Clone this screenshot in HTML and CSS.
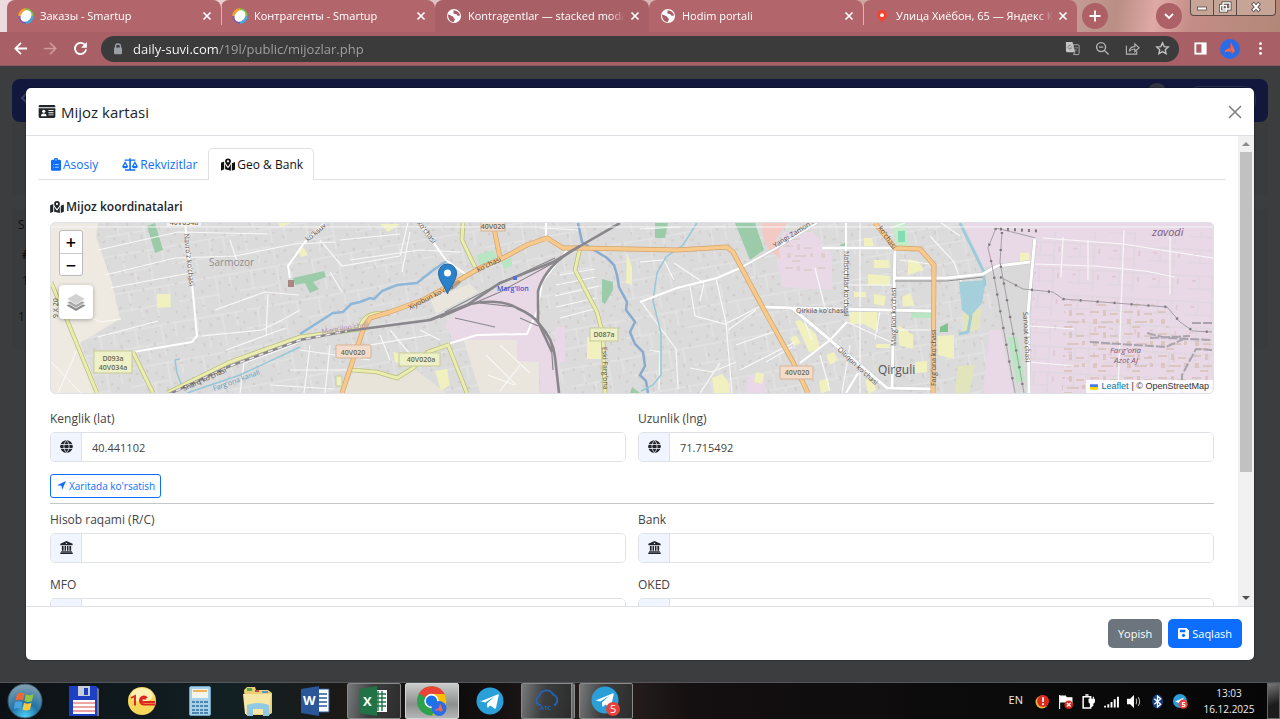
FILE: index.html
```html
<!DOCTYPE html>
<html lang="uz">
<head>
  <meta charset="UTF-8">
  <meta name="viewport" content="width=device-width, initial-scale=1.0">
  <title>Kontragentlar — stacked modal</title>
  <link rel="stylesheet" href="styles.css">
</head>
<body>

<!-- shared icons -->
<svg class="sprite" aria-hidden="true">
  <symbol id="i-close" viewBox="0 0 10 10"><path d="M1.5 1.5l7 7M8.5 1.5l-7 7" fill="none" stroke="currentColor" stroke-width="1.7"/></symbol>
  <symbol id="i-smartup" viewBox="0 0 16 16">
    <path d="M8 1.500A6.500 6.500 0 0 1 14.500 8" stroke="#7cc243" stroke-width="2.400" fill="none"/>
    <path d="M1.500 8A6.500 6.500 0 0 1 8 1.500" stroke="#f5a02c" stroke-width="2.600" fill="none"/>
    <path d="M14.500 8A6.500 6.500 0 0 1 8 14.500" stroke="#3fa9e0" stroke-width="2.600" fill="none"/>
    <path d="M8 14.500A6.500 6.500 0 0 1 1.500 8" stroke="#7a5bb5" stroke-width="2.400" fill="none"/>
    <ellipse cx="8" cy="8" rx="5" ry="6.200" fill="#fff" transform="rotate(40 8 8)"/>
  </symbol>
  <symbol id="i-world" viewBox="0 0 16 16">
    <circle cx="8" cy="8" r="7" fill="#fff"/>
    <path d="M2 6.500c2 .2 3 1.500 4.500 1.800 1.500.3.500 2 2 2.200.8.100.2 2-.8 3.500C4.500 14 2 11.500 2 6.500zM7 2.500c1.500 1.500-.5 2 1 3.200 1.200.8 2.500-.2 3 1.300.4 1.200 1.600.8 3 .5C13.500 4.500 11 2 7 2.500z" fill="#a95f66"/>
  </symbol>
  <symbol id="i-map" viewBox="0 0 16 14">
    <path d="M0 5l3.600-1.500V12.400L0 14zM4.700 6.500c.6 1.500 1.600 2.900 2.400 3.900.5.600 1.300.600 1.800 0 .8-1 1.800-2.400 2.400-3.900V14l-6.600-1.600zM12.400 5.500L16 4v8.600L12.400 14z" fill="currentColor"/>
    <path d="M8 0a3.400 3.400 0 0 0-3.400 3.400C4.600 5.200 7 8.200 8 9.300c1-1.100 3.400-4.100 3.400-5.900A3.400 3.400 0 0 0 8 0zm0 4.700a1.300 1.300 0 1 1 0-2.600 1.300 1.300 0 0 1 0 2.600z" fill="currentColor"/>
  </symbol>
  <symbol id="i-globe" viewBox="0 0 14 14">
    <circle cx="7" cy="7" r="6.800" fill="currentColor"/>
    <path d="M0 4.800h14M0 9.200h14M7 .5C3.300 4 3.300 10 7 13.500M7 .5c3.700 3.500 3.700 9.500 0 13" fill="none" stroke="#f1f5ff" stroke-width=".9"/>
  </symbol>
  <symbol id="i-bank" viewBox="0 0 14 14">
    <path d="M7 0l6.600 3v1.600H.4V3zM2 5.400h1.900v5H2zm2.900 0h1.600v5H4.900zm2.600 0h1.600v5H7.500zm2.600 0H12v5h-1.900zM1.200 11h11.600v1H1.200zM.3 12.300h13.400V14H.3z" fill="currentColor"/>
    <circle cx="7" cy="2.600" r=".7" fill="#f1f5ff"/>
  </symbol>
  <symbol id="i-telegram" viewBox="0 0 28 28">
    <circle cx="14" cy="14" r="13.500" fill="#2a9fd8"/>
    <path d="M5 14.200L21.500 7.400c.8-.3 1.400.2 1.200 1.200L20 20.800c-.2.900-.8 1.100-1.500.7l-4.200-3.100-2 2c-.5.500-1 .3-1-.4l-.3-3.600 7-6.300-8.800 5.500-3.900-1.200c-.9-.3-.9-.9-.3-1.200z" fill="#fff"/>
  </symbol>
</svg>

<!-- browser tabs -->
<header class="tabstrip">
  <div class="tab">
    <svg class="favicon"><use href="#i-smartup"/></svg>
    <span class="tab-title">Заказы - Smartup</span>
    <button class="tab-close" aria-label="Close"><svg><use href="#i-close"/></svg></button>
  </div>
  <div class="tab tab-line">
    <svg class="favicon"><use href="#i-smartup"/></svg>
    <span class="tab-title">Контрагенты - Smartup</span>
    <button class="tab-close" aria-label="Close"><svg><use href="#i-close"/></svg></button>
  </div>
  <div class="tab tab-active">
    <svg class="favicon"><use href="#i-world"/></svg>
    <span class="tab-title">Kontragentlar — stacked modal</span>
    <button class="tab-close" aria-label="Close"><svg><use href="#i-close"/></svg></button>
  </div>
  <div class="tab">
    <svg class="favicon"><use href="#i-world"/></svg>
    <span class="tab-title">Hodim portali</span>
    <button class="tab-close" aria-label="Close"><svg><use href="#i-close"/></svg></button>
  </div>
  <div class="tab tab-line">
    <svg class="favicon" viewBox="0 0 16 16"><path d="M8 2a5 5 0 0 0-5 5.200c0 3 3.500 3.600 4.200 6.800h1.600C9.500 10.800 13 10.200 13 7.200A5 5 0 0 0 8 2z" fill="#f8402f"/><circle cx="8" cy="7.200" r="1.900" fill="#fff"/></svg>
    <span class="tab-title">Улица Хиёбон, 65 — Яндекс Карты</span>
    <button class="tab-close" aria-label="Close"><svg><use href="#i-close"/></svg></button>
  </div>
  <button class="round-button" aria-label="New tab"><svg viewBox="0 0 12 12"><path d="M6 .5v11M.5 6h11" stroke="#fff" stroke-width="1.800"/></svg></button>
  <button class="round-button tab-search" aria-label="Search tabs"><svg viewBox="0 0 12 12"><path d="M2 4l4 4 4-4" fill="none" stroke="#fff" stroke-width="1.800"/></svg></button>
  <div class="window-buttons">
    <button aria-label="Minimize"><svg viewBox="0 0 16 14"><rect x="3.500" y="7" width="9" height="3" fill="#fff" stroke="#5a4a48" stroke-width=".8"/></svg></button>
    <button aria-label="Restore"><svg viewBox="0 0 16 14"><g fill="none" stroke="#4f4341" stroke-width="3"><path d="M6 3h7v6h-7zM3.500 5.500h6v5.500h-6z"/></g><g fill="none" stroke="#fff" stroke-width="1.400"><path d="M6 3h7v6h-7zM3.500 5.500h6v5.500h-6z"/></g></svg></button>
    <button class="window-close" aria-label="Close window"><svg viewBox="0 0 16 14"><path d="M4.500 3l7 8M11.500 3l-7 8" stroke="#4f4341" stroke-width="3.600"/><path d="M5 3.500l6 7M11 3.500l-6 7" stroke="#fff" stroke-width="2"/></svg></button>
  </div>
</header>

<!-- address bar -->
<nav class="toolbar">
  <button class="tool" aria-label="Back"><svg viewBox="0 0 16 16"><path d="M8.500 2L2.500 8l6 6M3 8h12" fill="none" stroke="#fff" stroke-width="1.900"/></svg></button>
  <button class="tool" aria-label="Forward"><svg viewBox="0 0 16 16"><path d="M7.500 2l6 6-6 6M13 8H1" fill="none" stroke="#d09a9d" stroke-width="1.700"/></svg></button>
  <button class="tool" aria-label="Reload"><svg viewBox="0 0 16 16"><path d="M13 4.500A6 6 0 1 0 14 9" fill="none" stroke="#fff" stroke-width="2"/><path d="M14.800 1v6.200H8.600z" fill="#fff"/></svg></button>
  <div class="omnibox">
    <svg class="lock" viewBox="0 0 10 12"><path d="M2.500 5V3.500a2.500 2.500 0 0 1 5 0V5" fill="none" stroke="#9aa0a6" stroke-width="1.300"/><rect x="1" y="4.600" width="8" height="6.600" rx="1" fill="#9aa0a6"/></svg>
    <input class="url" type="text" aria-label="Address" value="daily-suvi.com/19l/public/mijozlar.php">
    <button class="tool" aria-label="Translate"><svg viewBox="0 0 16 16"><path d="M1 1h7l2.500 11H2.500A1.500 1.500 0 0 1 1 10.500z" fill="#c4c4c4"/><path d="M8.500 4H14a1 1 0 0 1 1 1v8.500a1 1 0 0 1-1 1H9l1.500-2.500z" fill="none" stroke="#b0b0b0"/><path d="M7 5.500A2 2 0 1 0 7 7.500H5.200M10 7h4M12 6v1m1.300 0c-.5 2-1.500 3-2.800 4m0-3c.5 1.200 1.500 2 2.500 2.700" fill="none" stroke="#777" stroke-width=".9"/></svg></button>
    <button class="tool" aria-label="Zoom"><svg viewBox="0 0 16 16"><circle cx="6.500" cy="6.500" r="4.800" fill="none" stroke="#b4b4b4" stroke-width="1.500"/><path d="M10 10l4.500 4.500M4.200 6.500h4.600" stroke="#b4b4b4" stroke-width="1.500"/></svg></button>
    <button class="tool" aria-label="Share"><svg viewBox="0 0 16 16"><path d="M1.500 5v9h11v-3M4.500 11c.5-3.500 2.500-5 6-5V3l4.500 4.200-4.500 4.200V8.500c-2.500 0-4.500.5-6 2.500z" fill="none" stroke="#b4b4b4" stroke-width="1.200"/></svg></button>
    <button class="tool" aria-label="Bookmark"><svg viewBox="0 0 16 16"><path d="M8 2l1.800 4 4.400.4-3.300 2.900 1 4.300L8 11.300l-3.900 2.300 1-4.300-3.300-2.900 4.400-.4z" fill="none" stroke="#c4c4c4" stroke-width="1.400"/></svg></button>
  </div>
  <button class="tool" aria-label="Side panel"><svg viewBox="0 0 16 16"><path d="M1.500 1.500h13v13h-13z" fill="#fff"/><path d="M3.500 3.500H9v9H3.500z" fill="#a95f66"/></svg></button>
  <button class="tool tool-avatar" aria-label="Profile"><svg viewBox="0 0 20 20"><circle cx="10" cy="10" r="10" fill="#2a6be8"/><path d="M11 3.500c1 2 2 4.500 4 8.500l-2.500 2.500-3-2.200-5 .7c.5-2 3-3.200 5.200-3.800z" fill="#f0694f"/><path d="M11 3.500l-.7 6.500 2.200 4.500" fill="none" stroke="#c44a52" stroke-width=".8"/></svg></button>
  <button class="tool" aria-label="Menu"><svg viewBox="0 0 16 16"><circle cx="8" cy="2.800" r="1.500" fill="#fff"/><circle cx="8" cy="8" r="1.500" fill="#fff"/><circle cx="8" cy="13.200" r="1.500" fill="#fff"/></svg></button>
</nav>

<main class="page">
  <!-- dimmed page under the modal -->
  <div class="page-nav">
    <svg class="page-back" viewBox="0 0 8 12"><path d="M7 1L2 6l5 5" fill="none" stroke="#3b4160" stroke-width="2"/></svg>
    <span class="page-avatar"></span>
    <span class="page-pill"></span>
  </div>
  <div class="page-card"></div>
  <div class="page-card page-table">
    <p>S</p>
    <p class="cell"><b>#</b></p>
    <p class="cell">1</p>
    <p class="pager">1</p>
  </div>

  <section class="modal" role="dialog" aria-labelledby="modalTitle">
    <div class="modal-header">
      <svg class="title-icon" viewBox="0 0 18 14"><path d="M1.500 0h15A1.500 1.500 0 0 1 18 1.500V2.500H0v-1A1.500 1.500 0 0 1 1.500 0zM0 3.500h18v9a1.500 1.500 0 0 1-1.500 1.500h-15A1.500 1.500 0 0 1 0 12.500z" fill="currentColor"/><circle cx="5.500" cy="6.800" r="1.700" fill="#fff"/><path d="M2.500 12c0-2 1.200-2.800 3-2.800s3 .8 3 2.800zM10.500 5.500H16v1h-5.500zm0 2.300H16v1h-5.500zm0 2.300H16v1h-5.500z" fill="#fff"/></svg>
      <h1 id="modalTitle">Mijoz kartasi</h1>
      <button class="modal-close" aria-label="Yopish"><svg viewBox="0 0 14 14"><path d="M1 1l12 12M13 1L1 13" stroke="#7d7d7d" stroke-width="1.500"/></svg></button>
    </div>

    <div class="modal-middle">
      <div class="modal-body">
        <div class="nav-tabs">
          <a href="#asosiy"><svg class="i-clip" viewBox="0 0 11 14"><path d="M1.500 1.800h1.800a2.200 2.200 0 0 1 4.400 0h1.800A1.500 1.500 0 0 1 11 3.300v9.200A1.500 1.500 0 0 1 9.500 14h-8A1.500 1.500 0 0 1 0 12.500V3.300a1.500 1.500 0 0 1 1.500-1.500z" fill="currentColor"/><path d="M2.500 7h1m1 0h4m-6 3h1m1 0h4" stroke="#fff" stroke-width=".7"/><circle cx="5.500" cy="2" r=".7" fill="#fff"/></svg>Asosiy</a>
          <a href="#rekvizitlar"><svg class="i-scale" viewBox="0 0 18 14"><path d="M8.200 0h1.600v1.400H15v1.500h-5v9.500h5V14H3.500v-1.600h4.700V2.900H3V1.400h5.200z" fill="currentColor"/><path d="M.2 9.300L3.500 3.200l3.300 6.100c0 1.200-1.400 2-3.300 2s-3.300-.8-3.300-2zm2-.6h2.600L3.500 6.200zM11.200 9.300l3.300-6.100 3.300 6.100c0 1.200-1.400 2-3.300 2s-3.300-.8-3.300-2zm2-.6h2.600l-1.300-2.500z" fill="currentColor" fill-rule="evenodd"/></svg>Rekvizitlar</a>
          <a href="#geo" class="active"><svg class="i-map"><use href="#i-map"/></svg>Geo &amp; Bank</a>
        </div>

        <div class="tab-pane">
          <h2><svg class="i-map"><use href="#i-map"/></svg>Mijoz koordinatalari</h2>

          <div class="map">
            <svg class="map-tiles" viewBox="51 222 1162 172" preserveAspectRatio="xMidYMid slice" aria-label="Marg'ilon">
              <defs>
                <pattern id="houses" width="46" height="34" patternUnits="userSpaceOnUse" patternTransform="rotate(-14)">
                  <path d="M3 4h2v3H3zM9 11h3v2H9zM15 3h2v2h-2zM22 8h2v4h-2zM30 5h3v2h-3zM38 12h2v3h-2zM6 20h2v3H6zM14 25h3v2h-3zM24 19h2v2h-2zM33 24h2v4h-2zM41 21h3v2h-3zM20 30h2v3h-2z" fill="#cbc1bb" opacity=".5"/>
                </pattern>
                <pattern id="lanes" width="62" height="38" patternUnits="userSpaceOnUse" patternTransform="rotate(-10)">
                  <path d="M0 6h62M0 24h40M14 6v18M40 6v32M54 6v14M24 24v14" fill="none" stroke="#f2f2f2" stroke-width="1"/>
                </pattern>
                <pattern id="grid" width="40" height="26" patternUnits="userSpaceOnUse" patternTransform="rotate(3)">
                  <path d="M0 5h40M0 18h26M12 5v13M26 5v21" fill="none" stroke="#dcd5dc" stroke-width="1.200"/>
                  <path d="M5 9h4v2H5zM30 9h2v5h-2z" fill="#d6b9bd" opacity=".5"/>
                </pattern>
                <pattern id="works" width="34" height="22" patternUnits="userSpaceOnUse">
                  <path d="M2 3h9v2H2zM15 2h3v6h-3zM22 5h8v2h-8zM5 11h4v5H5zM13 13h12v2H13zM28 11h3v4h-3zM10 18h8v2h-8z" fill="#d6c0b6"/>
                </pattern>
              </defs>

              <rect x="51" y="222" width="1162" height="172" fill="#dbdbdb"/>
              <rect x="51" y="222" width="1162" height="172" fill="url(#lanes)" opacity=".5"/>
              <rect x="51" y="222" width="1162" height="172" fill="url(#houses)"/>

              <!-- fields -->
              <path d="M51 222h47l-2 14 16 47 8 36-30 18-10 6 20 51H51z" fill="#eeeae2"/>
              <path d="M463 338h76v55h-59zM430 298l40-14 8 8-42 22z" fill="#eae6de"/>
              <path d="M342 393l14-26 40 11 20-8 30 23z" fill="#e8e4da"/>
              <path d="M51 362l30 31M51 300l50 22 20-3M80 343l-22 50" stroke="#fafafa" fill="none"/>

              <!-- industrial areas -->
              <g fill="#e9d9e7">
                <path d="M445 325l15-17 93-46-10 13-6 37 3 16 20 20v45h-20v-31l-23-1v-21h-64z"/>
                <path d="M555 327h10v35h-8z"/>
                <path d="M783 232h30l19 23v35l-49-3-6-25z"/>
                <path d="M962 222h251v172h-186l6-132-48 6z"/>
                <path d="M990 330h18l9 63h-34z"/>
                <path d="M748 375h16l2 18h-20z"/>
              </g>
              <path d="M1036 232h177v162h-184z" fill="url(#grid)"/>
              <path d="M1064 304h100l6 30 42 10v50h-150z" fill="url(#works)" opacity=".75"/>
              <path d="M785 240l24-4 18 20-2 16-40-2z" fill="url(#works)" opacity=".5"/>
              <path d="M1034 264l-6 128-14 2-15-72-14-40-2-15z" fill="#d9d9d9"/>
              <path d="M762 223h25l-11 16 5 20-12-9-6-14z" fill="#f4c9c4"/>

              <!-- parks -->
              <g fill="#9ccbaa">
                <path d="M147 226l8-3 8 27-8 3zM293 278l31-7 2 6-13 5 6 7-9 4-5-10-10 2z"/>
                <path d="M602 279l11 3v8l-8 14-3-2zM655 223h13l-3 15h-10zM735 223h20l9 27-14 10zM632 387l8 6h-10z"/>
                <path d="M836 248l11-7v7z"/>
              </g>
              <path d="M477 255l16-5 5 10-18 7zM501 262l11-5v9l-8 3zM911 312h20v6h-20zM1008 337h9l8 43-8 3z" fill="#b9e6c2"/>
              <path d="M893 223h12l4 22-8 6-6-10z" fill="#c5ebc9"/>
              <path d="M898 231h7v11h-7zM876 296h7v7h-7zM800 327h4l4 10-4 1z" fill="#84dcb2"/>
              <path d="M940 327l8-4v9h-8zM937 336h9v6h-9z" fill="#7cc48c"/>
              <rect x="288" y="280" width="6" height="7" fill="#a98780"/>

              <!-- schools and yards -->
              <g fill="#f1f0bf">
                <path d="M157 294h13l1 13-14 1zM299 252l4-5 5 8-7 2zM380 224h20l-12 8zM278 223h14l-12 4zM587 337h16v22h-16zM627 252l5 15v18l-6-2zM393 352l10 2 2 12-10-4zM435 371l12-2 3 16-9 6z"/>
                <path d="M864 238h8l2 8-10 2zM874 260h15v8h-15zM868 274l22 2v10l-22-1zM908 259l10 2 6 9-16 5zM854 292h12v5h-12zM849 312h28l1 20-14-8h-14zM874 294l12 2-2 10-10-2zM902 297l8-4 5 13h-12zM795 321l5-1 16 14 4 15-11 3zM790 338l6-3 5 8-7 3zM826 355l8-3 4 8-8 5zM898 325l15 10v14l-14-4zM876 344h14v4h-14zM915 362l12-1v11l-12 1zM937 336l17-1v24l-16-4zM819 381l9-3 2 12-9 4zM865 380l8-2 3 12-8 4zM712 378l10-4 8 10v9h-16zM756 372l8 2-2 10-8-2zM1020 253h9v8h-9z"/>
              </g>
              <path d="M962 314l20-6-4 22-14 2zM958 366l17-1-6 28h-14z" fill="#e2e5bb"/>

              <!-- minor streets -->
              <g fill="none" stroke="#f8f8f8" stroke-width="1.200">
                <path d="M98 250l80-18 90 2M105 275l70-17 60-2 60-12 40-2M110 288l80-15M98 337l60-16M202 336l60-6 24-12 14-8M215 310l50-18 34 3M230 240l8 24M320 240l22 26 58-10 8-34M268 294l-2 42M330 272l12 20M226 350l60-22M240 393l4-30 54-20"/>
                <path d="M300 350l70 10M290 370h60M270 385l64 4M310 345l-6 48M330 345l-5 48M420 330l20 10M380 335l10 25M370 345l60-10M390 330l20 24"/>
                <path d="M340 240l60-6M350 260l70-10 40 2M410 232l-8 40M540 228l40 2M500 292l30-16M486 355l30 30M500 345l30 28M488 375l26 10M520 365l-20 26"/>
                <path d="M560 275l35-6M556 285l40-8M555 296l44-10M556 307l40-9M560 318l38-10M640 229l40-2M640 262l24-2 10 20M674 263l30 20-4 18M642 303l34 46M676 349l2 40M716 278l10 45 6 70M690 286l5 30 30 8 36-18M728 330l28-20M736 345l40-14M690 368l22 4 24-10M740 370l55-28M766 362l26-15M700 393l20-30M650 350l10 2-1 38"/>
                <path d="M815 268l10 40M800 310l12 30M847 322l48 22M860 223v170M847 285h48M900 260l30 4M895 330h38M905 223l-15 5M940 222l20 14M930 236l24 26 8 22M820 355l10 36M850 345l-8 48M880 311l-5 28"/>
                <path d="M1035 264l60 2 50 5 30 6M1030 326l44 3M1030 362l44 4M1063 237l-2 40M1043 238l80 6 90 14M1088 240v40M1124 230l-6 160M1170 234v60"/>
              </g>

              <!-- water -->
              <g fill="none" stroke="#8fb8d8" stroke-width="2.500">
                <path d="M300 334l33-21 10-1 8-8 9-2 10-4 4 1 8-8 15-6 20-2 15-12 16-11"/>
                <path d="M578 223l4 19 12 8 13 8 7 7 3 10 2 12 8 15-1 8 9 12-5 10 5 12 8 8 2 14-5 9 6 6 2 12" stroke="#8aabce"/>
              </g>
              <path d="M187 393l53-18 60-28M180 359l-5 1 2 13 6 16M697 223l-14 22-17 12-9 16-4 28 8 32v42l-8 10-12 6" fill="none" stroke="#95c8d8" stroke-width="1.500"/>
              <path d="M959 282l27-2-4 23-12 14-8-7z" fill="#a4cfdb"/>
              <path d="M960 223l23 47 2 16M971 315l-3 17-9 2" fill="none" stroke="#9dcbd9" stroke-width="3"/>

              <!-- white roads -->
              <g fill="none" stroke="#c6c6c6" stroke-width="4">
                <path d="M817 223l-44 27-33 18" stroke-width="3"/>
                <path d="M765 307l27 1 141 3M792 308l38 32 57 48 46 1M895 249l-3 139M822 248h73M895 278h52l36-4 14-8 33-4M1035 237l-7 76 1 80"/>
              </g>
              <g fill="none" stroke="#fff" stroke-width="3">
                <path d="M765 307l27 1 141 3M792 308l38 32 57 48 46 1M895 249l-3 139M822 248h73M895 278h52l36-4 14-8 33-4M1035 237l-7 76 1 80"/>
                <path d="M817 223l-44 27-33 18-23 10-40 10-37 14M185 223l7 60 5 53-5 6-59 10M290 278l-2-12 17-24 20-20M420 224l26 36 22 16M448 344l29-9 50-1 10-22 5-30 25-32M546 238v-16M800 363l30-23 17-18M846 223v85M846 393l12-20" stroke-width="2"/>
              </g>
              <path d="M895 281h52l36-4" stroke="#8e8e8e" fill="none"/>

              <!-- yellow roads -->
              <path d="M51 282l16 38 30 73M133 352l20 41M167 393l63-31 70-25 60-8M463 223l-1 17 13 27M352 370l25 2 20 6 16-10 15-16 20-7 19 48M580 248l-5 22 22 42 6 23 2 58M360 328q4-18 30-14" fill="none" stroke="#b9bd77" stroke-width="4.500"/>
              <path d="M51 282l16 38 30 73M133 352l20 41M167 393l63-31 70-25 60-8M463 223l-1 17 13 27M352 370l25 2 20 6 16-10 15-16 20-7 19 48M580 248l-5 22 22 42 6 23 2 58M360 328q4-18 30-14" fill="none" stroke="#e9edb0" stroke-width="3"/>

              <!-- orange roads -->
              <path d="M342 393l21-63 7-12 20-6 33-12 24-13 33-19 23-10 24-13 20-7 16 10h17l97 2 50-3 6 5 30 56 30 54 15 31M493 223l7 35M875 223l20 25 25 1 14 16-1 128" fill="none" stroke="#d3a46b" stroke-width="5"/>
              <path d="M342 393l21-63 7-12 20-6 33-12 24-13 33-19 23-10 24-13 20-7 16 10h17l97 2 50-3 6 5 30 56 30 54 15 31M493 223l7 35M875 223l20 25 25 1 14 16-1 128" fill="none" stroke="#f7c98c" stroke-width="3.600"/>

              <!-- railways -->
              <g fill="none" stroke="#8a878c" stroke-width="2.600">
                <path d="M167 395l63-29 70-26 47-9 83-11 37-15 33-22 53-21 29-17 38-22"/>
                <path d="M430 320l40-16q30-6 47 4 18 8 23 17 13 14 15 32l4 36M580 246q-34 18-42 45v31l14 30"/>
                <path d="M440 318l60-26 55-30M445 312l50-26 60-28M455 318l40 9M480 303l36 4M520 318l18 8M551 340l2 30" stroke-width="1.200"/>
              </g>
              <path d="M167 395l63-29 70-26 47-9" fill="none" stroke="#f1f1f1" stroke-width="1.400" stroke-dasharray="5 5"/>
              <path d="M1147 333l20 5 45 2M1090 342l76 5 20-9M1192 323h20M1182 393v-18l14-26 16 1M1150 338l40-2" fill="none" stroke="#a9a3ac" stroke-width="2" stroke-dasharray="9 2"/>

              <!-- power lines -->
              <path d="M996 228l-8 20 4 17 23 128M1002 232l-2 30 24 131M996 228l40 10M1000 277l23 12 30 3 10 7 104 8 13 15 13 9 19 1" fill="none" stroke="#a59fa5"/>
              <path d="M996 228l-8 20 4 17 23 128M1002 232l-2 30 24 131M1000 277l23 12 30 3 10 7 104 8 13 15 13 9 19 1" fill="none" stroke="#7d787e" stroke-width="2.400" stroke-dasharray="2 15"/>
              <path d="M1000 229l38 2" stroke="#7d787e" stroke-width="3" stroke-dasharray="2 5"/>
              <path d="M51 227h1162" stroke="#f6f6f6"/>

              <!-- road number plates -->
              <g fill="#eef0c8" stroke="#c7cb94">
                <rect x="94" y="351" width="38" height="22"/><rect x="399" y="353" width="41" height="13"/><rect x="590" y="328" width="28" height="13"/><rect x="336" y="376" width="6" height="10"/>
              </g>
              <g fill="#f3dccb" stroke="#d9b294">
                <rect x="336" y="345" width="35" height="13" rx="1"/><rect x="780" y="366" width="33" height="13" rx="1"/><rect x="481" y="221" width="24" height="10"/>
              </g>
              <rect x="167" y="221" width="34" height="5" fill="#f4f4f4"/>
              <g class="map-ref" text-anchor="middle">
                <text x="113" y="361">D093a</text><text x="113" y="370">40V034a</text><text x="421" y="362">40V020a</text><text x="604" y="337">D087a</text>
                <text x="353" y="355">40V020</text><text x="797" y="375">40V020</text><text x="184" y="225">40V034a</text><text x="493" y="229">40V020</text>
              </g>

              <!-- street names -->
              <g class="map-street">
                <text transform="translate(184 234) rotate(84)">Navro'z ko'chasi</text>
                <text transform="translate(308 242) rotate(-41)">ko'ksuv</text>
                <text transform="translate(417 223) rotate(53)">ko'chasi</text>
                <text transform="translate(184 391) rotate(-24)">Sharq ko'chasi</text>
                <text transform="translate(410 310) rotate(-27)">Xiyobon ko'cha</text>
                <text transform="translate(478 272) rotate(-25)">ko'chasi</text>
                <text transform="translate(775 248) rotate(-32)">Yangi Zamon ko'</text>
                <text x="796" y="313">Qirkila ko'chasi</text>
                <text transform="translate(844 251) rotate(90)">Nafistchilar ko'chasi</text>
                <text transform="translate(896 346) rotate(-90)">Marg'ilon ko'chasi</text>
                <text transform="translate(837 350) rotate(43)">Oltiqon ko'chasi</text>
                <text transform="translate(936 386) rotate(-90)">Farg'ona ko'chasi</text>
                <text transform="translate(878 228) rotate(56)">ko'chasi</text>
                <text transform="translate(1023 312) rotate(87)">Sanoat ko'chasi</text>
                <text transform="translate(602 347) rotate(88)">Eski Farg'ona</text>
                <text transform="translate(58 318) rotate(-90)">9 X 20</text>
              </g>
              <text class="map-water" transform="translate(214 391) rotate(-20)">Farg'ona kanali</text>
              <text class="map-rail" transform="translate(322 334) rotate(-9)">Marg'ilon choli</text>
              <text class="map-suburb" x="209" y="266">Sarmozor</text>
              <text class="map-town" x="878" y="374">Qirguli</text>
              <rect x="513" y="276" width="4" height="4" fill="#5b6fd6"/>
              <text class="map-station" x="497" y="291">Marg'ilon</text>
              <g class="map-plant">
                <text x="1152" y="236" class="big">zavodi</text>
                <text x="1110" y="353">Farg'ona</text>
                <text x="1114" y="363">Azot AJ</text>
              </g>

              <!-- marker -->
              <ellipse cx="453" cy="286" rx="9" ry="3" fill="#555" opacity=".35" transform="rotate(-35 453 286)"/>
              <path d="M447.500 294c-2-7-9-13-9-21a9 9 0 0 1 18 0c0 8-7 14-9 21z" fill="#2a81cb" stroke="#2467a3"/>
              <circle cx="447.500" cy="273" r="3.500" fill="#fff"/>
            </svg>

            <div class="map-controls">
              <div class="zoom">
                <button aria-label="Zoom in">+</button>
                <button aria-label="Zoom out">−</button>
              </div>
              <button class="layers" aria-label="Layers"><svg viewBox="0 0 20 20"><path d="M10 9l9.500 4.500L10 19 .5 13.500z" fill="#8c8c8c"/><path d="M10 6l9.500 4.500L10 16 .5 10.500z" fill="#a8a8a8" stroke="#fff" stroke-width=".7"/><path d="M10 1.500L19.500 7 10 12.500.5 7z" fill="#d2d2d2" stroke="#fff" stroke-width=".7"/></svg></button>
            </div>
            <div class="attribution">
              <svg viewBox="0 0 12 8"><path d="M0 0h12v4H0z" fill="#4c7be1"/><path d="M0 4h12v4H0z" fill="#ffd500"/></svg>
              <a href="#leaflet">Leaflet</a> | © OpenStreetMap
            </div>
          </div>

          <div class="row">
            <div class="field">
              <label for="lat">Kenglik (lat)</label>
              <div class="input-group"><span class="addon"><svg><use href="#i-globe"/></svg></span><input id="lat" type="text" value="40.441102"></div>
            </div>
            <div class="field">
              <label for="lng">Uzunlik (lng)</label>
              <div class="input-group"><span class="addon"><svg><use href="#i-globe"/></svg></span><input id="lng" type="text" value="71.715492"></div>
            </div>
          </div>

          <button class="show-on-map"><svg viewBox="0 0 10 10"><path d="M0 4.600L10 0 5.600 10 5 5.200z" fill="currentColor"/></svg>Xaritada ko'rsatish</button>

          <hr>

          <div class="row">
            <div class="field">
              <label for="account">Hisob raqami (R/C)</label>
              <div class="input-group"><span class="addon"><svg><use href="#i-bank"/></svg></span><input id="account" type="text"></div>
            </div>
            <div class="field">
              <label for="bank">Bank</label>
              <div class="input-group"><span class="addon"><svg><use href="#i-bank"/></svg></span><input id="bank" type="text"></div>
            </div>
            <div class="field">
              <label for="mfo">MFO</label>
              <div class="input-group"><span class="addon"></span><input id="mfo" type="text"></div>
            </div>
            <div class="field">
              <label for="oked">OKED</label>
              <div class="input-group"><span class="addon"></span><input id="oked" type="text"></div>
            </div>
          </div>
        </div>
      </div>

      <div class="scrollbar">
        <span class="arrow arrow-up"></span>
        <div class="track"><div class="thumb"></div></div>
        <span class="arrow arrow-down"></span>
      </div>
    </div>

    <div class="modal-footer">
      <button class="btn btn-secondary">Yopish</button>
      <button class="btn btn-primary"><svg viewBox="0 0 12 12"><path d="M1.500 0h7.800L12 2.700v7.800a1.500 1.500 0 0 1-1.500 1.500h-9A1.500 1.500 0 0 1 0 10.500v-9A1.500 1.500 0 0 1 1.500 0z" fill="#fff"/><path d="M2 2h6v2.500H2z" fill="#0d6efd"/><circle cx="6" cy="8" r="1.700" fill="#0d6efd"/></svg>Saqlash</button>
    </div>
  </section>
</main>

<!-- windows taskbar -->
<footer class="taskbar">
  <button class="start" aria-label="Start">
    <svg viewBox="0 0 36 36">
      <defs><radialGradient id="orb" cx=".5" cy=".95" r=".9"><stop offset="0" stop-color="#4fd0f5"/><stop offset=".45" stop-color="#2173a8"/><stop offset="1" stop-color="#7f9db0"/></radialGradient></defs>
      <circle cx="18" cy="18" r="17" fill="url(#orb)" stroke="#38566b"/>
      <path d="M10 11c3-1.800 5-1.600 7.500-.3l-1.500 6.800c-2.500-1.200-4.500-1.300-7.500.2z" fill="#ee6a35"/>
      <path d="M19 11.300c2.500 1.200 4.500 1.200 7.500-.3L25 18c-3 1.500-5 1.300-7.500 0z" fill="#8ec63f"/>
      <path d="M8 19.300c3-1.500 5-1.300 7.500 0L14 26c-2.500-1.300-4.500-1.400-7.300 0z" fill="#4ba3e3"/>
      <path d="M17 19.800c2.500 1.300 4.500 1.300 7.500 0L23 26.500c-3 1.500-5 1.300-7.500 0z" fill="#fccb3d"/>
    </svg>
  </button>
  <button class="task" aria-label="Total Commander">
    <svg viewBox="0 0 30 30"><path d="M0 0h27l3 3v27H0z" fill="#1c3fc4"/><path d="M30 3v27h-2V2z" fill="#777"/><rect x="9" y="0" width="12" height="10" fill="#c9cdd8"/><rect x="15" y="2" width="4" height="7" fill="#1c3fc4"/><rect x="4" y="14" width="22" height="14" fill="#fff"/><path d="M4 17h22M4 21h22M4 25h22" stroke="#e04848" stroke-width="1.200"/></svg>
  </button>
  <button class="task" aria-label="1C">
    <svg viewBox="0 0 30 30"><circle cx="15" cy="15" r="14" fill="#f7d65c"/><ellipse cx="15" cy="9" rx="11" ry="7" fill="#fdf0b4"/><path d="M4 12l4-2v9.500M20 12a4 4 0 1 0-3 6.500H28M18.500 13.500a2 2 0 1 0-1 2.500H28" fill="none" stroke="#de2420" stroke-width="1.900"/></svg>
  </button>
  <button class="task" aria-label="Calculator">
    <svg viewBox="0 0 30 30"><rect x="4.500" y=".5" width="21" height="29" rx="1.500" fill="#a9d2ea" stroke="#6fa3c2"/><rect x="7" y="3" width="16" height="9" fill="#f4f4ea"/><path d="M8 4h14v2H8z" fill="#f0b357"/><path d="M7 16h3m1 0h3m1 0h3m1 0h4M7 20h3m1 0h3m1 0h3m1 0h4M7 24h3m1 0h3m1 0h3m1 0h4M7 27h7m1 0h3m1 0h4" stroke="#4d86ad" stroke-width="2"/></svg>
  </button>
  <button class="task" aria-label="Explorer">
    <svg viewBox="0 0 30 30"><path d="M1 4l3-3h8l1 3h12l4 3v20l-3 2H3z" fill="#eccf72"/><path d="M4 2h5v3H4z" fill="#4fae4b"/><path d="M12 4h4v2h-4z" fill="#c94a3b"/><path d="M19 5h6v2h-6z" fill="#4c9bd6"/><path d="M0 8h28l-2 20H2z" fill="#f7e7a5"/><path d="M4 19q11-4 22 0v11h-6v-7H10v7H4z" fill="#8fc9e4"/></svg>
  </button>
  <button class="task" aria-label="Word">
    <svg viewBox="0 0 30 30"><path d="M14 3h14v23H14z" fill="#fff" stroke="#2b579a"/><path d="M17 8h9m-9 4h9m-9 4h9m-9 4h9" stroke="#2b579a" stroke-width="1.600"/><path d="M0 3l18-3v30L0 27z" fill="#2b579a"/><text x="2" y="19" class="office">W</text></svg>
  </button>
  <button class="task task-open" aria-label="Excel">
    <svg viewBox="0 0 30 30"><path d="M14 4h14v22H14z" fill="#fff"/><path d="M17 8h10m-10 4h10m-10 4h10m-10 4h10M19 5v20M23 5v20" stroke="#217346" stroke-width="1.400"/><path d="M0 3l18-3v30L0 27z" fill="#217346"/><text x="4" y="20" class="office">X</text></svg>
  </button>
  <button class="task task-open task-active" aria-label="Chrome">
    <svg viewBox="0 0 30 30"><circle cx="14.500" cy="15" r="14.500" fill="#2da24c"/><path d="M14.500 15L2 7.500A14.500 14.500 0 0 1 27.500 8z" fill="#ea4335"/><path d="M14.500 8H27.500A14.500 14.500 0 0 1 15 29.500l6-11z" fill="#fbbc05"/><circle cx="14.500" cy="15" r="7.200" fill="#fff"/><circle cx="14.500" cy="15" r="5.600" fill="#1a73e8"/><circle cx="22" cy="22.500" r="7.500" fill="#2a6be8"/><path d="M23 17.500c.8 1.500 1.500 3.500 3 6.500l-2 2-2.200-1.700-4 .5c.5-1.500 2.500-2.400 4-2.800z" fill="#f0694f"/></svg>
  </button>
  <button class="task" aria-label="Telegram"><svg viewBox="0 0 30 30"><use href="#i-telegram" x="1" y="1" width="28" height="28"/></svg></button>
  <button class="task task-open task-stack" aria-label="ATC">
    <svg viewBox="0 0 30 30"><path d="M9 19H8a4.500 4.500 0 0 1-1-8.500 7.500 7.500 0 0 1 14-2 6 6 0 0 1 2 10.500h-1" fill="none" stroke="#2563b5" stroke-width="1.800"/><text x="8" y="24" class="atc">ATC</text></svg>
  </button>
  <button class="task task-open" aria-label="Telegram, 5">
    <svg viewBox="0 0 30 30"><use href="#i-telegram" width="28" height="28"/><circle cx="22" cy="23" r="7" fill="#e8403a"/><text x="19" y="27" class="badge">5</text></svg>
  </button>

  <div class="tray">
    <span class="lang">EN</span>
    <svg viewBox="0 0 14 14"><circle cx="6.500" cy="7.500" r="6" fill="#e8b93a"/><circle cx="7.500" cy="6.500" r="5.500" fill="#dc2a22"/><path d="M7.500 3v4.500M7.500 8.700v1.500" stroke="#fff" stroke-width="1.600"/></svg>
    <svg viewBox="0 0 14 14"><path d="M1.500 1v13M2 2h5l1 1.500h5V9H8L7 7.500H2z" fill="#fff" stroke="#fff"/><circle cx="10" cy="10" r="4" fill="#d8281f"/><path d="M8.300 8.300l3.400 3.400M11.700 8.300l-3.400 3.400" stroke="#fff" stroke-width="1.200"/></svg>
    <svg viewBox="0 0 14 14"><path d="M2 2.500h7v10.500H2zM4 1h3" fill="none" stroke="#fff" stroke-width="1.400"/><path d="M7.500 5h5v2.500l-1.500 1.500v2l-2 1v-3l-1.500-1.500zM8.500 2.500V5m3-2.500V5" fill="#fff" stroke="#fff"/></svg>
    <svg viewBox="0 0 14 14"><path d="M1 12.500v-1.500M4 12.500v-3M7 12.500v-5M10 12.500v-7.500M13 12.500v-10" stroke="#fff" stroke-width="1.800"/></svg>
    <svg viewBox="0 0 14 14"><path d="M0 4.500h3L6.500 1v12L3 9.500H0z" fill="#fff"/><path d="M8.500 4.500q1.500 2.500 0 5M10.500 3q2.500 4 0 8" fill="none" stroke="#bbb"/></svg>
    <svg viewBox="0 0 14 14"><ellipse cx="7" cy="7" rx="5" ry="6.500" fill="#153f86"/><path d="M4 4.500l6 5-3 2.500V2l3 2.500-6 5" fill="none" stroke="#fff" stroke-width="1.200"/></svg>
    <svg viewBox="0 0 14 14"><circle cx="6.500" cy="6.500" r="6.500" fill="#2a9fd8"/><path d="M2 7l8-3.500-1.500 6z" fill="#fff"/><circle cx="9.500" cy="9.500" r="4.300" fill="#e8403a"/><text x="8" y="12" class="tray-badge">5</text></svg>
    <time class="clock"><span>13:03</span><span>16.12.2025</span></time>
    <button class="show-desktop" aria-label="Show desktop"></button>
  </div>
</footer>

</body>
</html>
```
FILE: styles.css
```css
* {
  box-sizing: border-box;
}

body {
  margin: 0;
  height: 100vh;
  display: flex;
  flex-direction: column;
  overflow: hidden;
  font-family: "Open Sans", "Noto Sans", sans-serif;
  font-size: 12px;
  color: #212529;
  background-color: #3c3d3f;
}

button, input {
  font-family: inherit;
  font-size: inherit;
  margin: 0;
}

button {
  padding: 0;
  border: none;
  background: none;
  cursor: pointer;
}

svg {
  display: block;
  flex: none;
}

h1, h2, p {
  margin: 0;
}

.sprite {
  position: absolute;
  width: 0;
  height: 0;
}

/* browser tabs */
.tabstrip {
  display: flex;
  align-items: center;
  height: 32px;
  padding-left: 7px;
  flex: none;
  background: linear-gradient(100deg, #ecdcdf 0, #e3c7c8 30%, #c39a94 84%, #b98e84 87%, #dfa9a6 90%, #c48c86 93%, #b18878 100%);
}

.tab {
  display: flex;
  align-items: center;
  flex: 0 1 214px;
  min-width: 0;
  height: 32px;
  padding: 0 9px 0 11px;
  border-radius: 8px 8px 0 0;
  background-color: #b2666b;
  color: #fff;
  font-size: 11px;
}

.tab-line {
  background-image: linear-gradient(#d9b3b5, #d9b3b5);
  background-size: 1px 20px;
  background-position: 0 5px;
  background-repeat: no-repeat;
}

.tab-active {
  background-color: #a95f66;
}

.favicon {
  width: 16px;
  height: 16px;
}

.tab-title {
  flex: 1;
  min-width: 0;
  margin: 0 5px 2px 6px;
  overflow: hidden;
  white-space: nowrap;
  mask-image: linear-gradient(to right, #000 90%, transparent);
}

.tab-close {
  width: 10px;
  height: 10px;
  color: #fff;
}

.tab-close svg {
  width: 10px;
  height: 10px;
}

.round-button {
  display: flex;
  align-items: center;
  justify-content: center;
  width: 26px;
  height: 26px;
  margin-left: 5px;
  border-radius: 50%;
  background-color: #ad6066;
}

.round-button svg {
  width: 12px;
  height: 12px;
}

.tab-search {
  margin-left: auto;
}

.window-buttons {
  display: flex;
  align-self: flex-start;
  margin: 0 4px 0 8px;
  height: 16px;
  border: 1px solid #594945;
  border-top: none;
  border-radius: 0 0 4px 4px;
  background-color: #c6a596;
}

.window-buttons button {
  width: 23px;
  display: flex;
  justify-content: center;
  border-right: 1px solid #594945;
}

.window-buttons .window-close {
  width: 38px;
  border-right: none;
}

.window-buttons svg {
  width: 16px;
  height: 14px;
}

/* toolbar */
.toolbar {
  display: flex;
  align-items: center;
  flex: none;
  height: 34px;
  padding: 0 5px;
  background-color: #a95f66;
  border-bottom: 1px solid #8a5b60;
}

.tool {
  display: flex;
  align-items: center;
  justify-content: center;
  width: 30px;
  height: 26px;
}

.tool svg {
  width: 15px;
  height: 15px;
}

.tool-avatar svg {
  width: 20px;
  height: 20px;
}

.omnibox {
  display: flex;
  align-items: center;
  flex: 1;
  height: 26px;
  margin: 0 6px 0 6px;
  padding: 0 2px 0 12px;
  border-radius: 13px;
  background-color: #3b3b3b;
}

.lock {
  width: 10px;
  height: 12px;
}

.url {
  flex: 1;
  min-width: 0;
  height: 24px;
  margin-left: 10px;
  padding: 0;
  border: none;
  outline: none;
  font-size: 13px;
  color: transparent;
  background: linear-gradient(to right, #fff 86px, #a3a3a3 86px);
  -webkit-background-clip: text;
  background-clip: text;
}

/* dimmed page */
.page {
  position: relative;
  flex: 1;
  min-height: 0;
  padding: 13px 12px;
}

.page-nav {
  display: flex;
  align-items: flex-start;
  height: 43px;
  padding: 4px 12px 4px 8px;
  border-radius: 8px;
  background-color: #12183d;
}

.page-back {
  width: 8px;
  height: 12px;
  margin-top: 9px;
}

.page-avatar {
  width: 20px;
  height: 20px;
  margin: 0 20px 0 auto;
  border-radius: 50%;
  background-color: #34363f;
}

.page-pill {
  width: 69px;
  height: 28px;
  margin-top: 3px;
  border: 1px solid #2c3152;
  border-radius: 12px;
}

.page-card {
  height: 73px;
  border-radius: 4px;
  background-color: #3a3b3d;
}

.page-table {
  height: 140px;
  margin-top: 14px;
  padding: 8px 6px;
  color: #111;
}

.page-table p {
  line-height: 16px;
  margin-bottom: 14px;
}

.page-table .cell {
  padding-left: 4px;
  margin-bottom: 10px;
}

.page-table .pager {
  margin-top: 20px;
}

/* modal */
.modal {
  position: absolute;
  inset: 22px 26px;
  display: flex;
  flex-direction: column;
  border-radius: 5px;
  background-color: #fff;
  box-shadow: 0 0 2px rgba(0, 0, 0, 0.6);
  overflow: hidden;
}

.modal-header {
  display: flex;
  align-items: center;
  flex: none;
  height: 48px;
  padding: 0 12px;
  border-bottom: 1px solid #dee2e6;
}

.title-icon {
  width: 18px;
  height: 13px;
}

.modal-header h1 {
  margin-left: 5px;
  font-size: 15px;
  font-weight: 400;
}

.modal-close {
  margin-left: auto;
}

.modal-close svg {
  width: 14px;
  height: 14px;
}

.modal-middle {
  display: flex;
  flex: 1;
  min-height: 0;
}

.modal-body {
  flex: 1;
  min-width: 0;
  padding: 12px;
  overflow: hidden;
}

.nav-tabs {
  display: flex;
  height: 32px;
  border-bottom: 1px solid #dee2e6;
}

.nav-tabs a {
  display: flex;
  align-items: center;
  height: 32px;
  padding: 0 10px 0 12px;
  border: 1px solid transparent;
  border-bottom: none;
  color: #0d6efd;
  text-decoration: none;
}

.nav-tabs a.active {
  border-color: #dee2e6;
  border-radius: 5px 5px 0 0;
  background-color: #fff;
  color: #111;
}

.nav-tabs svg {
  height: 13px;
  margin-right: 2px;
}

.i-clip {
  width: 10px;
}

.i-scale {
  width: 16px;
}

.i-map {
  width: 14px;
  height: 12px;
}

.tab-pane {
  padding: 17px 12px 12px;
}

.tab-pane h2 {
  display: flex;
  align-items: center;
  gap: 2px;
  margin-bottom: 5px;
  font-size: 12px;
  line-height: 20px;
  font-weight: 600;
}

/* map */
.map {
  position: relative;
  height: 172px;
  border: 1px solid #dee2e6;
  border-radius: 5px;
  overflow: hidden;
}

.map-tiles {
  width: 100%;
  height: 100%;
}

.map-ref {
  font-size: 7px;
  font-weight: 600;
  fill: #6b6a52;
}

.map-street {
  font-size: 7px;
  fill: #5a5048;
}

.map-water {
  font-size: 7px;
  fill: #5b9bc0;
}

.map-rail {
  font-size: 7px;
  fill: #b48dbb;
}

.map-suburb {
  font-size: 10px;
  fill: #8d8d8d;
}

.map-town {
  font-size: 12px;
  fill: #555;
}

.map-station {
  font-size: 7px;
  font-weight: 600;
  fill: #3f51d0;
}

.map-plant {
  font-size: 8px;
  font-style: italic;
  fill: #7d5a80;
}

.map-plant .big {
  font-size: 11px;
}

.map-controls {
  position: absolute;
  top: 7px;
  left: 8px;
}

.zoom {
  display: flex;
  flex-direction: column;
  width: 24px;
  border: 1px solid #bbb;
  border-radius: 3px;
  background-color: #fff;
}

.zoom button {
  height: 22px;
  font-size: 18px;
  line-height: 20px;
  font-weight: 600;
  color: #000;
}

.zoom button + button {
  border-top: 1px solid #ccc;
}

.layers {
  display: flex;
  align-items: center;
  justify-content: center;
  width: 34px;
  height: 34px;
  margin-top: 9px;
  border-radius: 4px;
  background-color: #fff;
  box-shadow: 0 1px 4px rgba(0, 0, 0, 0.3);
}

.layers svg {
  width: 20px;
  height: 20px;
}

.attribution {
  position: absolute;
  right: 0;
  bottom: 0;
  display: flex;
  align-items: center;
  gap: 3px;
  padding: 0 4px;
  font-family: "Liberation Sans", Arial, sans-serif;
  font-size: 9px;
  line-height: 13px;
  color: #333;
  background-color: rgba(255, 255, 255, 0.85);
}

.attribution svg {
  width: 8px;
  height: 6px;
}

.attribution a {
  color: #0078a8;
  text-decoration: none;
}

/* form */
.row {
  display: grid;
  grid-template-columns: 1fr 1fr;
  gap: 12px;
  margin-top: 15px;
}

.field label {
  display: block;
  margin-bottom: 3px;
  line-height: 20px;
  color: #444;
}

.input-group {
  display: flex;
  height: 30px;
  border: 1px solid #dee2e6;
  border-radius: 5px;
  overflow: hidden;
}

.addon {
  display: flex;
  justify-content: center;
  width: 31px;
  padding-top: 7px;
  border-right: 1px solid #dee2e6;
  background-color: #f1f5ff;
}

.addon svg {
  width: 13px;
  height: 13px;
}

.input-group input {
  flex: 1;
  min-width: 0;
  padding: 0 10px;
  border: none;
  outline: none;
  font-size: 11px;
  color: #444;
  background-color: #fff;
}

.show-on-map {
  display: flex;
  align-items: center;
  gap: 3px;
  height: 24px;
  margin-top: 12px;
  padding: 0 5px 1px 6px;
  border: 1px solid #0d6efd;
  border-radius: 3px;
  color: #0d6efd;
  font-size: 10px;
}

.show-on-map svg {
  width: 9px;
  height: 9px;
}

hr {
  margin: 5px 0 0;
  border: none;
  border-top: 1px solid #c4c6c8;
}

hr + .row {
  margin-top: 6px;
}

/* scrollbar */
.scrollbar {
  display: flex;
  flex-direction: column;
  align-items: center;
  flex: none;
  width: 16px;
  background-color: #f1f1f1;
}

.arrow {
  display: flex;
  align-items: center;
  justify-content: center;
  height: 16px;
}

.arrow::before {
  content: "";
  border: 4px solid transparent;
}

.arrow-up::before {
  border-top: none;
  border-bottom-color: #8a8a8a;
}

.arrow-down::before {
  border-bottom: none;
  border-top-color: #505050;
}

.track {
  flex: 1;
  width: 12px;
}

.thumb {
  height: 73%;
  background-color: #c1c1c1;
}

.modal-footer {
  display: flex;
  align-items: center;
  justify-content: flex-end;
  gap: 6px;
  flex: none;
  height: 54px;
  padding: 0 12px;
  border-top: 1px solid #dee2e6;
}

.btn {
  display: flex;
  align-items: center;
  gap: 3px;
  height: 29px;
  padding: 0 10px;
  border-radius: 5px;
  font-size: 11px;
  color: #fff;
}

.btn svg {
  width: 11px;
  height: 11px;
}

.btn-secondary {
  background-color: #6c757d;
}

.btn-primary {
  background-color: #0d6efd;
}

/* taskbar */
.taskbar {
  display: flex;
  align-items: center;
  gap: 4px;
  flex: none;
  height: 37px;
  border-top: 1px solid #55565a;
  background: linear-gradient(to right, #0c1014, #122024 18%, #1d1815 28%, #0e0c0d 36%, #2a2120 48%, #140f10 54%, #0b0b0c 78%, #060607);
}

.start {
  width: 53px;
  height: 36px;
}

.start svg {
  width: 36px;
  height: 36px;
  margin: 0 auto 0 7px;
}

.task {
  display: flex;
  align-items: center;
  justify-content: center;
  width: 54px;
  height: 36px;
}

.task svg {
  width: 30px;
  height: 30px;
}

.task-open {
  border: 1px solid #8a8a8a;
  border-radius: 2px;
  background: linear-gradient(100deg, #77797a, #3c3d3d 45%, #2c2c2d);
}

.task-active {
  background: linear-gradient(#c9cbca, #8d908f 60%, #b4b6b5);
  border-color: #d5d5d5;
}

.task-stack {
  border-right: 4px double #8a8a8a;
}

.office {
  font-size: 13px;
  font-weight: 700;
  fill: #fff;
}

.atc {
  font-size: 6px;
  font-weight: 700;
  fill: #2563b5;
}

.badge {
  font-size: 11px;
  fill: #fff;
}

.tray-badge {
  font-size: 7px;
  font-weight: 700;
  fill: #fff;
}

.tray {
  display: flex;
  align-items: center;
  gap: 8px;
  height: 36px;
  margin-left: auto;
  color: #eee;
  font-size: 11px;
}

.tray svg {
  width: 15px;
  height: 15px;
}

.lang {
  margin: 0 4px 4px 0;
}

.clock {
  width: 52px;
  margin: 0 4px 0 7px;
  text-align: center;
  font-size: 10px;
  line-height: 16px;
}

.clock span {
  display: block;
}

.show-desktop {
  width: 13px;
  height: 36px;
  border: 1px solid #666;
  background: linear-gradient(160deg, #777, #1c1c1c 60%);
}
```
